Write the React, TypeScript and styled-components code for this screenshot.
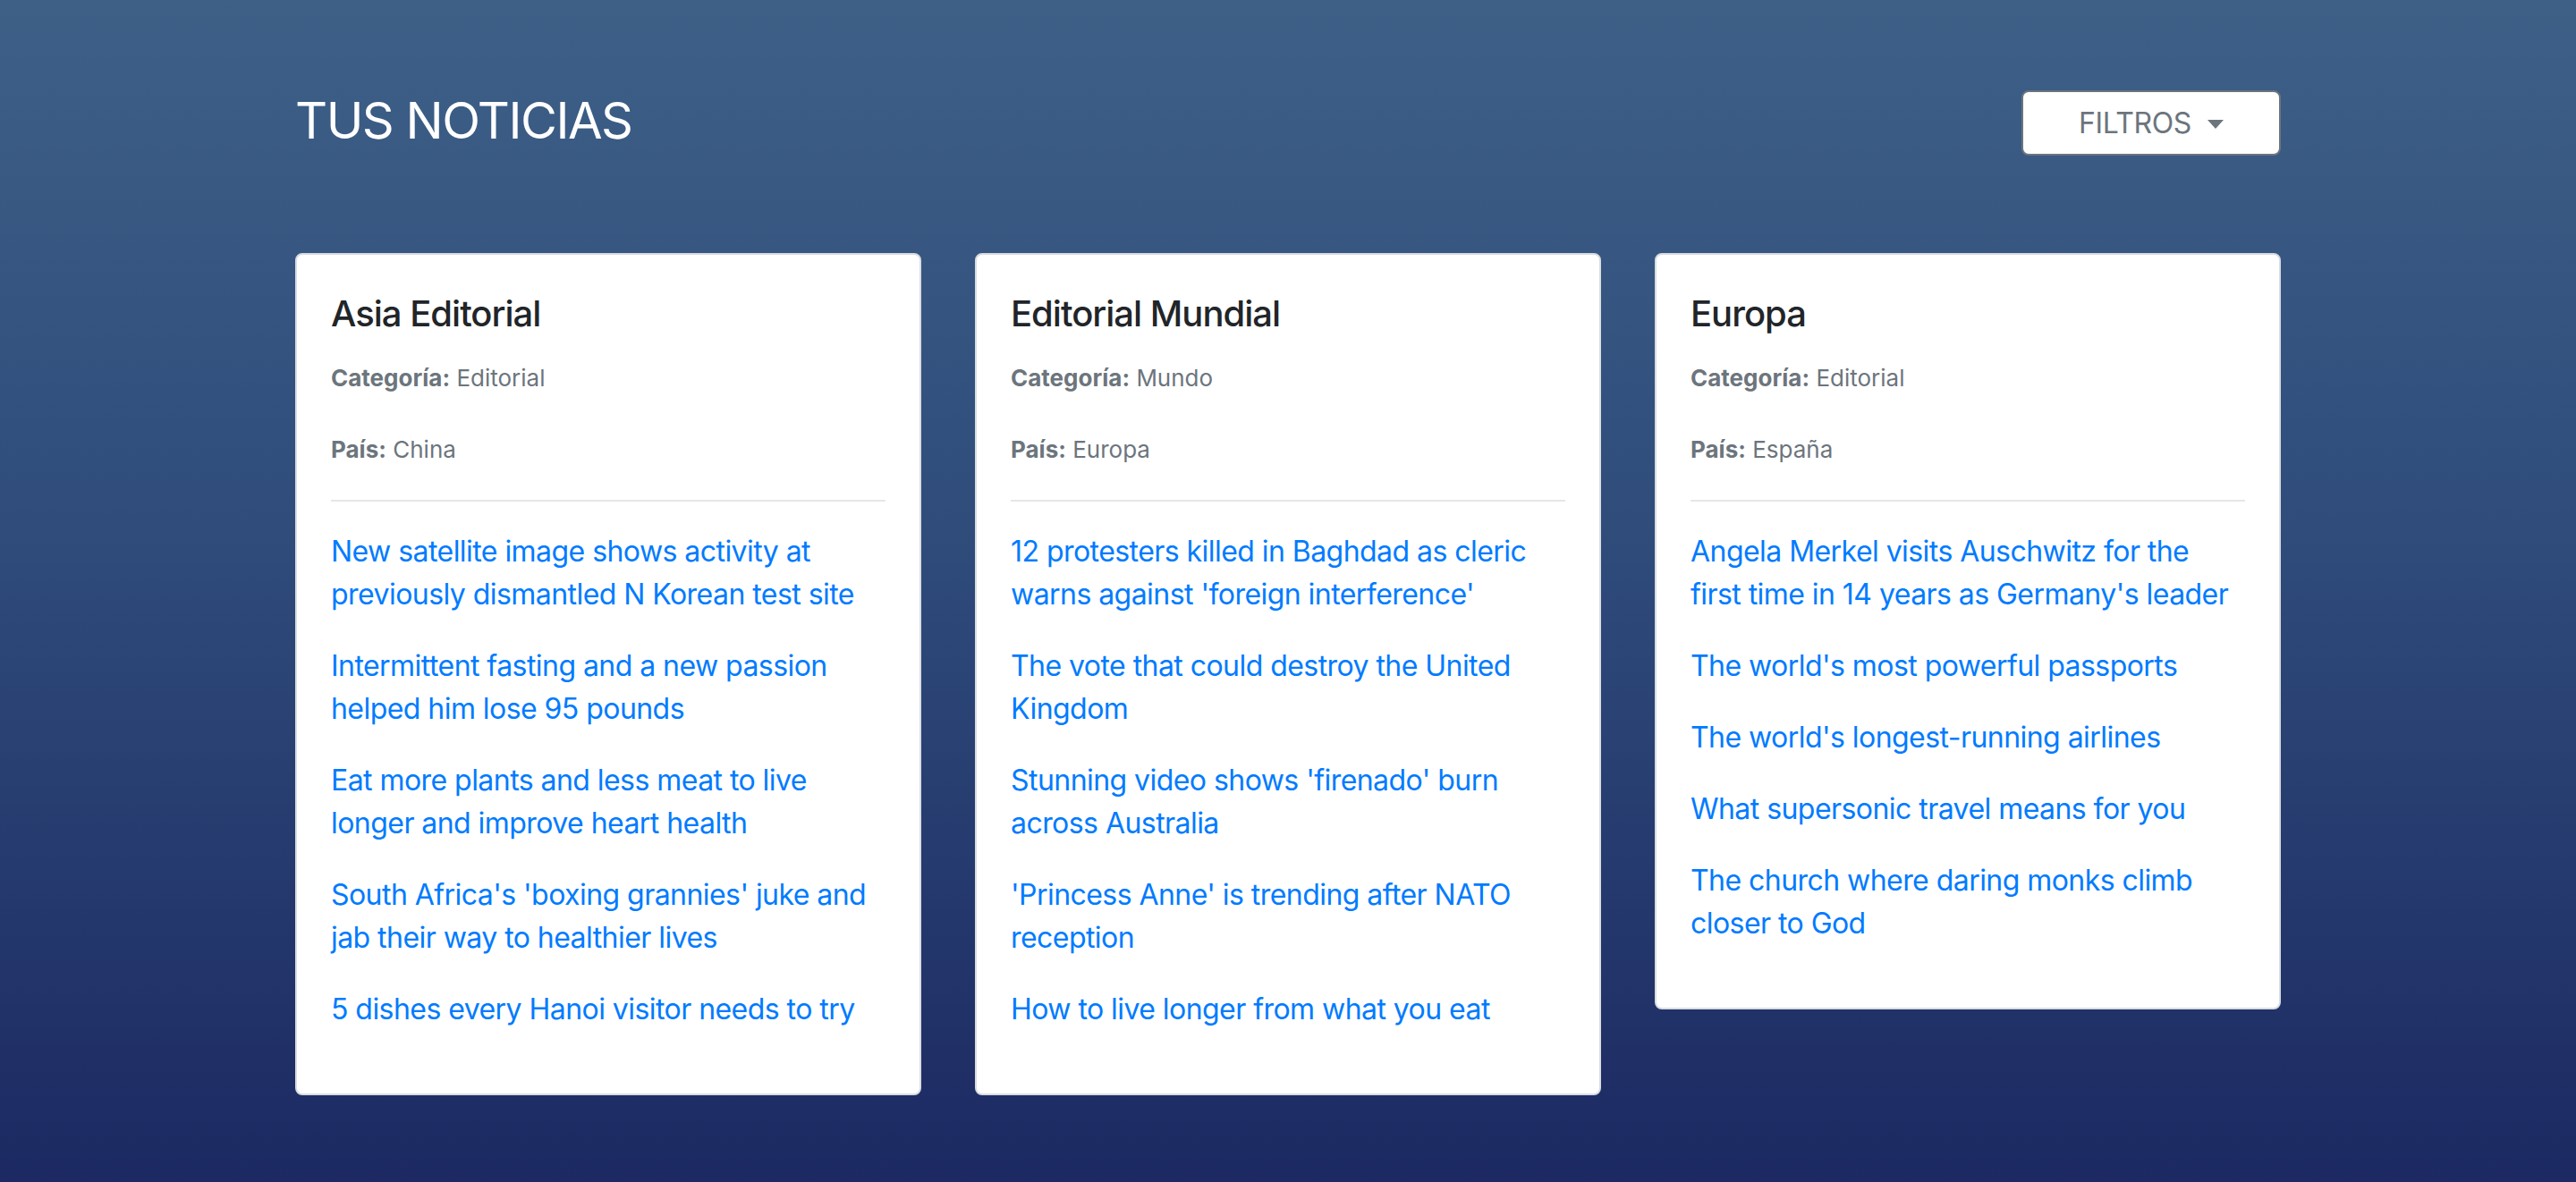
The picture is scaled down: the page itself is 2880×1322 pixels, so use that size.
import React from "react";
import styled, { createGlobalStyle } from "styled-components";

const GlobalStyle = createGlobalStyle`
  html, body {
    margin: 0;
    padding: 0;
  }
  body {
    font-family: Inter, "Noto Sans", sans-serif;
    font-size: 32px;
    line-height: 48px;
    color: #212529;
    background: #1d2a64;
  }
  * {
    box-sizing: border-box;
  }
`;

const Page = styled.div`
  min-height: 1322px;
  background: linear-gradient(180deg, #3e6087 0%, #2f4c7b 45%, #1c2962 100%);
  padding-top: 101px;
  padding-bottom: 60px;
`;

const Container = styled.div`
  width: 2280px;
  margin: 0 auto;
  padding: 0 30px;
`;

const Header = styled.div`
  display: flex;
  justify-content: space-between;
  align-items: center;
  height: 73px;
  margin-bottom: 109px;
`;

const PageTitle = styled.h2`
  margin: 0 0 6px;
  font-size: 56px;
  font-weight: 400;
  line-height: 70px;
  color: #fff;
  letter-spacing: -1.5px;
`;

const FilterButton = styled.button`
  display: flex;
  align-items: center;
  justify-content: center;
  gap: 18px;
  width: 290px;
  height: 73px;
  background: #fff;
  border: 2px solid #6c757d;
  border-radius: 8px;
  color: #6c757d;
  font-family: inherit;
  font-size: 32px;
  line-height: 48px;
  letter-spacing: -0.4px;
  cursor: pointer;
`;

const Caret = styled.span`
  display: inline-block;
  width: 0;
  height: 0;
  border-top: 10px solid #6c757d;
  border-left: 9px solid transparent;
  border-right: 9px solid transparent;
  margin-top: 2px;
`;

const CardGrid = styled.div`
  display: grid;
  grid-template-columns: repeat(3, 700px);
  column-gap: 60px;
  align-items: start;
`;

const Card = styled.div`
  background: #fff;
  border: 2px solid #d9dce0;
  border-radius: 8px;
  padding: 42px 38px 38px;
`;

const CardTitle = styled.h5`
  margin: 0 0 24px;
  font-size: 40px;
  font-weight: 500;
  line-height: 48px;
  letter-spacing: -1px;
  color: #212529;
`;

const InfoLine = styled.p`
  margin: 0 0 32px;
  font-size: 26px;
  color: #6c757d;

  strong {
    font-weight: 700;
  }
`;

const Divider = styled.hr`
  margin: 0 0 32px;
  border: 0;
  border-top: 2px solid #e6e6e6;
`;

const NewsLink = styled.a`
  display: block;
  margin: 0 0 32px;
  color: #007bff;
  letter-spacing: -0.55px;
  text-decoration: none;
`;

type Section = {
  title: string;
  category: string;
  country: string;
  news: string[];
};

const sections: Section[] = [
  {
    title: "Asia Editorial",
    category: "Editorial",
    country: "China",
    news: [
      "New satellite image shows activity at previously dismantled N Korean test site",
      "Intermittent fasting and a new passion helped him lose 95 pounds",
      "Eat more plants and less meat to live longer and improve heart health",
      "South Africa's 'boxing grannies' juke and jab their way to healthier lives",
      "5 dishes every Hanoi visitor needs to try",
    ],
  },
  {
    title: "Editorial Mundial",
    category: "Mundo",
    country: "Europa",
    news: [
      "12 protesters killed in Baghdad as cleric warns against 'foreign interference'",
      "The vote that could destroy the United Kingdom",
      "Stunning video shows 'firenado' burn across Australia",
      "'Princess Anne' is trending after NATO reception",
      "How to live longer from what you eat",
    ],
  },
  {
    title: "Europa",
    category: "Editorial",
    country: "España",
    news: [
      "Angela Merkel visits Auschwitz for the first time in 14 years as Germany's leader",
      "The world's most powerful passports",
      "The world's longest-running airlines",
      "What supersonic travel means for you",
      "The church where daring monks climb closer to God",
    ],
  },
];

const NewsCard = ({ section }: { section: Section }) => (
  <Card>
    <CardTitle>{section.title}</CardTitle>
    <InfoLine>
      <strong>Categoría:</strong> {section.category}
    </InfoLine>
    <InfoLine>
      <strong>País:</strong> {section.country}
    </InfoLine>
    <Divider />
    {section.news.map((item) => (
      <NewsLink key={item} href="#">
        {item}
      </NewsLink>
    ))}
  </Card>
);

export default function App() {
  return (
    <>
      <GlobalStyle />
      <Page>
        <Container>
          <Header>
            <PageTitle>TUS NOTICIAS</PageTitle>
            <FilterButton>
              FILTROS <Caret />
            </FilterButton>
          </Header>
          <CardGrid>
            {sections.map((s) => (
              <NewsCard key={s.title} section={s} />
            ))}
          </CardGrid>
        </Container>
      </Page>
    </>
  );
}
